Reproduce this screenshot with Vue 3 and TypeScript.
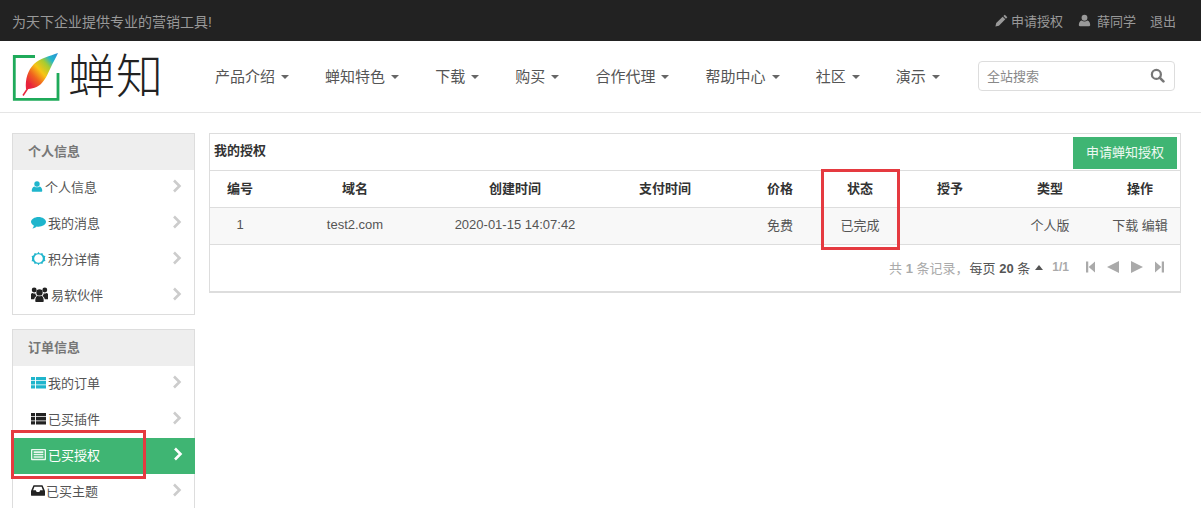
<script setup lang="ts">
const nav = ['产品介绍', '蝉知特色', '下载', '购买', '合作代理', '帮助中心', '社区', '演示']
const icons: Record<string, string> = {
  user: 'M8 1a3.600 3.600 0 1 1 0 7.200A3.600 3.600 0 0 1 8 1zM1 13.600c0-3 1.400-5 3.500-5.600 2 1.500 5 1.500 7 0 2.100.6 3.500 2.600 3.500 5.600 0 .8-.5 1.400-1.300 1.400H2.300C1.500 15 1 14.400 1 13.600z',
  comment: 'M8 2c4.200 0 8 2.300 8 5.200s-3.800 5.200-8 5.200c-.7 0-1.300 0-2-.2C5 13.200 3.400 14 1.500 14.300c.8-.8 1.400-1.800 1.500-3.100C1.200 10.200 0 8.700 0 7.200 0 4.300 3.800 2 8 2z',
  ring: 'M8 .8l1 1.500a5.800 5.800 0 0 1 1.600.4L12.200 2l.4 1.700a5.800 5.800 0 0 1 1.100 1.300l1.700.2-.6 1.700a5.800 5.800 0 0 1 0 2.200l.6 1.700-1.700.2a5.800 5.800 0 0 1-1.100 1.300l-.4 1.700-1.600-.7a5.800 5.800 0 0 1-1.600.4l-1 1.500-1-1.500a5.800 5.800 0 0 1-1.600-.4l-1.600.7-.4-1.700A5.800 5.800 0 0 1 2.300 11l-1.700-.2.6-1.700a5.800 5.800 0 0 1 0-2.200L.6 5.200 2.300 5a5.800 5.800 0 0 1 1.100-1.300L3.800 2l1.600.7A5.800 5.800 0 0 1 7 2.300zM8 3.400a4.600 4.600 0 1 0 0 9.200 4.600 4.600 0 0 0 0-9.200z',
  users: 'M8 3a3 3 0 1 1 0 6 3 3 0 0 1 0-6zM3 1.500a2.300 2.300 0 1 1 0 4.600 2.300 2.300 0 0 1 0-4.600zM13 1.500a2.300 2.300 0 1 1 0 4.600 2.300 2.300 0 0 1 0-4.600zM0 7.500c.4-.7 1-1 1.500-1 .9.700 2 .7 2.500.4.100 1 .5 1.800 1.200 2.400C3.900 10 3.100 11.200 3 12.500H0zM16 7.500c-.4-.7-1-1-1.500-1-.9.700-2 .7-2.500.4-.1 1-.5 1.800-1.200 2.400 1.300.7 2.100 1.900 2.200 3.200H16zM4 14c0-2.800 1.200-4.500 2.300-4.800 1.100.7 2.300.7 3.400 0 1.100.3 2.300 2 2.300 4.800 0 .6-.5 1-1 1H5c-.5 0-1-.4-1-1z',
  th: 'M0 2h4.300v3.600H0zM5.300 2H16v3.600H5.300zM0 6.400h4.300V10H0zM5.300 6.400H16V10H5.300zM0 10.800h4.300v3.600H0zM5.300 10.800H16v3.600H5.300z',
  listalt: 'M1 2h14a1 1 0 0 1 1 1v10a1 1 0 0 1-1 1H1a1 1 0 0 1-1-1V3a1 1 0 0 1 1-1zm.4 1.400v9.200h13.200V3.400zM2.800 4.600h10.400v1.700H2.800zM2.800 7.200h10.400v1.700H2.800zM2.800 9.800h10.400v1.700H2.800z',
  inbox: 'M3.500 2h9c.4 0 .7.2.9.5L16 8.500V13a1 1 0 0 1-1 1H1a1 1 0 0 1-1-1V8.500l2.600-6c.2-.3.5-.5.9-.5zM3.900 3.600 2.400 7.800h3.100l1 1.800h3l1-1.800h3.100l-1.500-4.200z',
}
const groups = [
  { title: '个人信息', items: [
    { label: '个人信息', icon: 'user', cyan: true, cls: 'gap4' },
    { label: '我的消息', icon: 'comment', cyan: true, cls: 'gap0' },
    { label: '积分详情', icon: 'ring', cyan: true, cls: 'gap0' },
    { label: '易软伙伴', icon: 'users', cyan: false, cls: 'gap2' },
  ] },
  { title: '订单信息', items: [
    { label: '我的订单', icon: 'th', cyan: true, cls: 'gap0' },
    { label: '已买插件', icon: 'th', cyan: false, cls: 'gap0' },
    { label: '已买授权', icon: 'listalt', cyan: false, active: true, cls: 'gap0' },
    { label: '已买主题', icon: 'inbox', cyan: false, cls: 'gapn' },
  ] },
]
const cols = ['编号', '域名', '创建时间', '支付时间', '价格', '状态', '授予', '类型', '操作']
const row = ['1', 'test2.com', '2020-01-15 14:07:42', '', '免费', '已完成', '', '个人版', '下载 编辑']
</script>

<template>
  <div class="page">
    <div class="topbar">
      <span>为天下企业提供专业的营销工具!</span>
      <div class="toplinks">
        <span class="toplink">
          <svg class="ti" viewBox="0 0 16 16"><path d="M12 .8l3.200 3.200-1.700 1.700-3.200-3.200zM9.400 3.300l3.300 3.300-7.900 7.900L.5 15.500l1-4.300z" /></svg>申请授权
        </span>
        <span class="toplink wide">
          <svg class="ti" viewBox="0 0 16 16"><path :d="icons.user" /></svg>薛同学
        </span>
        <span>退出</span>
      </div>
    </div>

    <header class="header">
      <div class="logo">
        <svg class="mark" viewBox="0 0 50 50" width="50" height="50">
          <defs>
            <linearGradient id="fg" x1="0" y1="1" x2="1" y2="0">
              <stop offset="0.12" stop-color="#e8243c" />
              <stop offset=".3" stop-color="#f0621f" />
              <stop offset=".48" stop-color="#f8c514" />
              <stop offset=".66" stop-color="#a8cc30" />
              <stop offset=".8" stop-color="#25b7c9" />
              <stop offset="1" stop-color="#2a8fd8" />
            </linearGradient>
          </defs>
          <path d="M23 5.500H2.300V48.300H46V22" fill="none" stroke="#1faa5a" stroke-width="2.800" />
          <path d="M46 2C38 5 28 7 22 13 16 19 13 28 14 38 20 38 26 36 29 33 34 28 36 22 39 16 41 11 44 7 46 2z" fill="url(#fg)" />
          <path d="M11 44.500l8-12" stroke="#e8243c" stroke-width="1.500" fill="none" />
        </svg>
        <span class="logotext">蝉知</span>
      </div>
      <nav class="nav">
        <span v-for="n in nav" :key="n" class="navitem">{{ n }}<i class="caret" /></span>
      </nav>
      <div class="search">
        <span>全站搜索</span>
        <svg class="si" viewBox="0 0 16 16"><circle cx="6.800" cy="6.800" r="4.800" fill="none" stroke="#777" stroke-width="2.400" /><path d="M10.300 10.300l4 4" stroke="#777" stroke-width="2.800" stroke-linecap="round" /></svg>
      </div>
    </header>

    <div class="body">
      <aside class="side">
        <section v-for="g in groups" :key="g.title" class="group">
          <h4>{{ g.title }}</h4>
          <div v-for="it in g.items" :key="it.label" class="item" :class="{ active: it.active }">
            <svg class="ic" :class="[{ cyan: it.cyan }, it.cls]" viewBox="0 0 16 16"><path :d="icons[it.icon]" fill-rule="evenodd" /></svg>
            <span>{{ it.label }}</span>
            <svg class="chev" viewBox="0 0 10 14"><path d="M2 1.500 7.500 7 2 12.500" fill="none" stroke-width="2.600" /></svg>
          </div>
        </section>
      </aside>

      <main class="panel">
        <div class="phead">
          <strong>我的授权</strong>
          <span class="btn">申请蝉知授权</span>
        </div>
        <div class="tr th"><div v-for="c in cols" :key="c">{{ c }}</div></div>
        <div class="tr td"><div v-for="(c, i) in row" :key="i">{{ c }}</div></div>
        <div class="pager">
          <span class="muted">共 <b>1</b> 条记录，</span>
          <span class="dark">每页 <b>20</b> 条</span>
          <i class="up" />
          <b class="muted count">1/1</b>
          <svg class="pg first" viewBox="0 0 10 12"><path d="M0 0h2.500v12H0zM10 0v12L3 6z" /></svg>
          <svg class="pg" viewBox="0 0 12 12"><path d="M12 0v12L0 6z" /></svg>
          <svg class="pg" viewBox="0 0 12 12"><path d="M0 0v12l12-6z" /></svg>
          <svg class="pg last" viewBox="0 0 10 12"><path d="M0 0v12l7-6zM7.500 0H10v12H7.500z" /></svg>
        </div>
      </main>
    </div>

    <div class="mark-box box-a" />
    <div class="mark-box box-b" />
  </div>
</template>

<style>
html, body { overflow: hidden; background: #fff; }
</style>

<style scoped>
.page {
  position: relative;
  height: 508px;
  overflow: hidden;
  font-family: "Liberation Sans", "Noto Sans CJK SC", sans-serif;
  font-size: 13px;
  color: #444;
}
.topbar {
  height: 41px;
  box-sizing: border-box;
  background: #222;
  color: #999;
  font-size: 14px;
  display: flex;
  align-items: center;
  justify-content: space-between;
  padding: 0 25px 0 12px;
}
.toplinks { display: flex; align-items: center; gap: 14px; font-size: 13px; }
.toplink { display: flex; align-items: center; gap: 3px; margin-right: 1px; }
.toplink.wide { gap: 6px; margin-right: 0; }
.ti { width: 13px; height: 13px; fill: #999; }
.header {
  height: 72px;
  box-sizing: border-box;
  border-bottom: 1px solid #e5e5e5;
  display: flex;
  align-items: center;
  padding: 0 26px 0 12px;
}
.logo { width: 203px; display: flex; align-items: center; gap: 6px; flex: none; }
.mark { flex: none; margin-top: -1px; }
.logotext {
  font-size: 47px;
  line-height: 50px;
  font-weight: 200;
  color: #222;
  letter-spacing: 1px;
}
.nav { display: flex; gap: 36.1px; font-size: 15px; color: #555; margin-top: -3px; }
.navitem { display: flex; align-items: center; white-space: nowrap; }
.caret {
  width: 0; height: 0; margin-left: 6px; margin-top: 4px;
  border-left: 4px solid transparent;
  border-right: 4px solid transparent;
  border-top: 4px solid #666;
}
.search {
  margin-left: auto;
  width: 197px;
  height: 30px;
  box-sizing: border-box;
  border: 1px solid #ddd;
  border-radius: 4px;
  display: flex;
  align-items: center;
  justify-content: space-between;
  padding: 0 9px 2px 8px;
  color: #888;
  margin-top: -1px;
}
.si { width: 15px; height: 15px; }
.body { display: flex; padding: 20px 20px 0 12px; gap: 14px; align-items: flex-start; }
.side { width: 183px; flex: none; display: flex; flex-direction: column; gap: 14px; }
.group { border: 1px solid #ddd; }
.group h4 {
  margin: 0;
  height: 36px;
  line-height: 36px;
  background: #eee;
  padding-left: 15px;
  font-size: 13px;
  font-weight: 700;
  color: #777;
}
.item {
  height: 36px;
  box-sizing: border-box;
  display: flex;
  align-items: center;
  padding: 0 12px 4px 18px;
  color: #555;
}
.item span { flex: 1; }
.ic { width: 15px; height: 15px; fill: #222; flex: none; margin-right: 2px; }
.ic.cyan { fill: #1fb5cc; }
.ic.gap4 { width: 12px; margin-right: 2px; }
.ic.gap2 { width: 17px; height: 17px; margin-right: 3px; }
.ic.gapn { margin-right: 1px; width: 14px; }
.chev { width: 10px; height: 14px; stroke: #ccc; flex: none; }
.item.active { background: #3fb573; color: #fff; margin: 0 -1px 0 0; }
.item.active .ic { fill: #e9f8ef; }
.item.active .chev { stroke: #fff; }
.panel {
  width: 972px;
  box-sizing: border-box;
  border: 1px solid #ddd;
  border-bottom: 2px solid #ddd;
}
.phead {
  height: 37px;
  box-sizing: border-box;
  border-bottom: 1px solid #ddd;
  display: flex;
  align-items: center;
  justify-content: space-between;
  padding: 2px 3px 0 4px;
}
.phead strong { color: #333; font-size: 13px; margin-bottom: 8px; }
.btn {
  width: 104px;
  height: 32px;
  line-height: 32px;
  text-align: center;
  background: #3fb573;
  color: #eef9f2;
  font-size: 13px;
}
.tr {
  display: grid;
  grid-template-columns: 60px 170px 150px 150px 80px 80px 100px 100px 1fr;
  height: 37px;
  align-items: center;
  text-align: center;
  border-bottom: 1px solid #ddd;
  box-sizing: border-box;
}
.th { font-weight: 700; color: #333; padding-bottom: 4px; }
.td { background: #f8f8f8; color: #555; padding-bottom: 3px; }
.pager {
  height: 46px;
  box-sizing: border-box;
  display: flex;
  align-items: center;
  justify-content: flex-end;
  padding: 0 16px 2px 0;
}
.muted { color: #aaa; margin-right: 1px; }
.muted b, b.muted { font-weight: 700; }
.dark { color: #555; }
.up {
  width: 0; height: 0; margin: 0 9px 0 5px;
  border-left: 4px solid transparent;
  border-right: 4px solid transparent;
  border-bottom: 5px solid #555;
}
.count { font-size: 12px; margin-right: 17px; }
.pg { width: 12px; height: 12px; fill: #aaa; margin-left: 12px; }
.pg.first { width: 9px; margin-left: 0; }
.pg.last { width: 9px; }
.mark-box { position: absolute; border: 3px solid #e53a40; box-sizing: border-box; }
.box-a { left: 821px; top: 169px; width: 79px; height: 81px; }
.box-b { left: 11px; top: 430px; width: 135px; height: 49px; }
</style>
